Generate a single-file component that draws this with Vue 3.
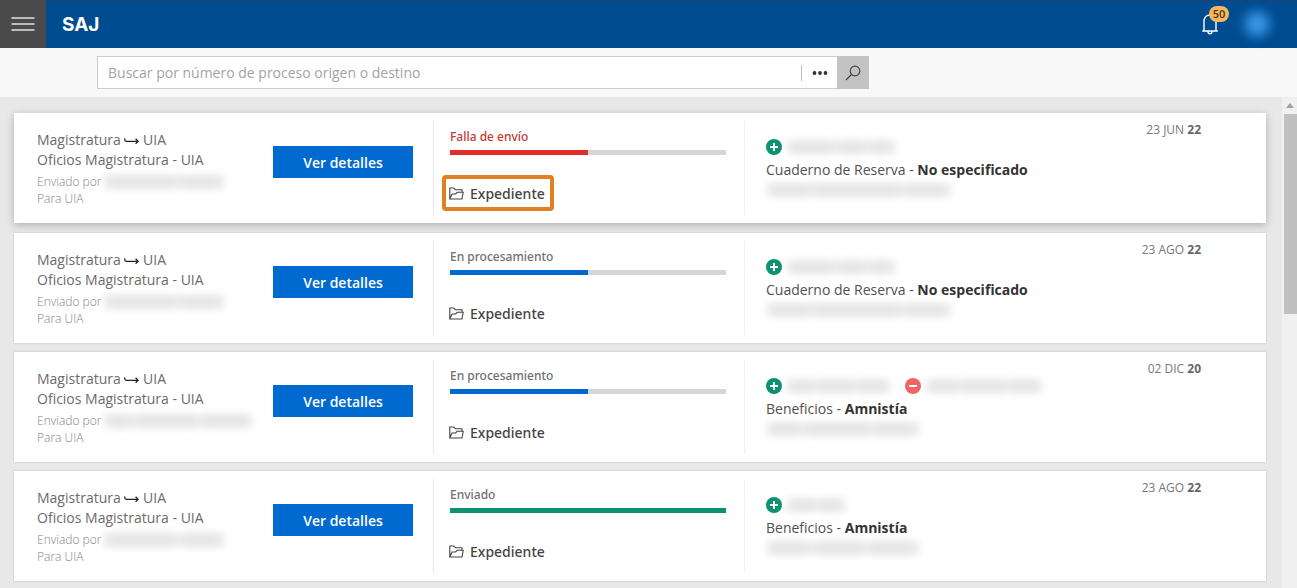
<script setup>
const shipments = [
  {
    id: 1, status: 'Falla de envío', kind: 'error', progress: 50, active: true,
    sender: [72, 42], subject: 'Cuaderno de Reserva', detail: 'No especificado',
    parties: [{ type: 'plus', words: [46, 30, 24] }], reference: [42, 88, 46],
    date: '23 JUN', year: '22'
  },
  {
    id: 2, status: 'En procesamiento', kind: 'working', progress: 50,
    sender: [72, 42], subject: 'Cuaderno de Reserva', detail: 'No especificado',
    parties: [{ type: 'plus', words: [46, 30, 24] }], reference: [42, 88, 46],
    date: '23 AGO', year: '22'
  },
  {
    id: 3, status: 'En procesamiento', kind: 'working', progress: 50,
    sender: [26, 64, 50], subject: 'Beneficios', detail: 'Amnistía',
    parties: [
      { type: 'plus', words: [27, 38, 30] },
      { type: 'minus', words: [32, 46, 30] }
    ],
    reference: [32, 68, 44], date: '02 DIC', year: '20'
  },
  {
    id: 4, status: 'Enviado', kind: 'sent', progress: 100,
    sender: [72, 42], subject: 'Beneficios', detail: 'Amnistía',
    parties: [{ type: 'plus', words: [26, 26] }], reference: [42, 52, 50],
    date: '23 AGO', year: '22'
  }
]
</script>

<template>
  <div class="app">
    <header class="topbar">
      <button class="menu" type="button" aria-label="Menú">
        <svg width="24" height="16" viewBox="0 0 24 16" fill="none" stroke="#e2e2e2" stroke-width="1.5">
          <path d="M.5 2h23M.5 8h23M.5 14h23" />
        </svg>
      </button>
      <span class="brand">SAJ</span>
      <button class="bell" type="button" aria-label="Notificaciones">
        <svg width="18" height="22" viewBox="0 0 18 22" fill="none" stroke="#fff" stroke-width="1.4">
          <path d="M1.2 18h15.6M3 18V8.500C3 4.500 5.500 2 9 2s6 2.500 6 6.500V18M7 18.500c0 3 4 3 4 0" />
        </svg>
        <span class="count">50</span>
      </button>
      <button class="avatar" type="button" aria-label="Perfil"><span class="avatar-glow"></span></button>
    </header>

    <form class="searchbar" @submit.prevent>
      <div class="search-field">
        <input class="search-input" type="text" aria-label="Buscar" placeholder="Buscar por número de proceso origen o destino" />
        <button class="more" type="button" aria-label="Más opciones">
          <svg width="16" height="4" viewBox="0 0 16 4" fill="#333">
            <circle cx="2.500" cy="2" r="1.900" /><circle cx="8" cy="2" r="1.900" /><circle cx="13.500" cy="2" r="1.900" />
          </svg>
        </button>
      </div>
      <button class="search-button" type="submit" aria-label="Buscar proceso">
        <svg width="16" height="16" viewBox="0 0 16 16" fill="none" stroke="#444" stroke-width="1.2">
          <circle cx="10" cy="6" r="4.800" /><path d="M6.500 9.500L1 15" />
        </svg>
      </button>
    </form>

    <div class="body">
      <main class="list">
        <article v-for="item in shipments" :key="item.id" class="card" :class="{ active: item.active }">
          <section class="route">
            <div class="route-text">
              <p class="line">
                Magistratura
                <svg class="arrow" width="15" height="8" viewBox="0 0 15 8" fill="none" stroke="#222" stroke-width="1.3">
                  <path d="M.8 1.500v1.300c0 1 .5 1.500 1.500 1.500h11.500" /><path d="M11.600 1.800l2.500 2.500-2.500 2.500" />
                </svg>
                UIA
              </p>
              <p class="line">Oficios Magistratura - UIA</p>
              <p class="small first">Enviado por
                <span class="redacted" aria-hidden="true">
                  <span v-for="(w, i) in item.sender" :key="i" class="word" :style="{ width: w + 'px' }"></span>
                </span>
              </p>
              <p class="small">Para UIA</p>
            </div>
            <button class="details" type="button">Ver detalles</button>
          </section>

          <section class="state" :class="item.kind">
            <span class="status">{{ item.status }}</span>
            <div class="track" role="progressbar" :aria-label="item.status" :aria-valuenow="item.progress">
              <div class="fill" :style="{ width: item.progress + '%' }"></div>
            </div>
            <button class="file" :class="{ marked: item.active }" type="button">
              <svg width="15" height="13" viewBox="0 0 15 13" fill="none" stroke="#444" stroke-width="1.100">
                <path d="M.8 12V1h4l1.500 1.700h6.700v2.600M.8 12l2.200-5h3.500l1.700-1.700h6L13 12z" />
              </svg>
              Expediente
            </button>
          </section>

          <section class="case">
            <div class="case-text">
              <div class="parties">
                <span v-for="party in item.parties" :key="party.type" class="party">
                  <svg width="16" height="16" viewBox="0 0 16 16" fill="none" stroke="#fff" stroke-width="2">
                    <circle cx="8" cy="8" r="8" stroke="none" :fill="party.type === 'plus' ? '#0b9270' : '#f06464'" />
                    <path :d="party.type === 'plus' ? 'M4 8h8M8 4v8' : 'M4 8h8'" />
                  </svg>
                  <span class="redacted" aria-hidden="true">
                    <span v-for="(w, i) in party.words" :key="i" class="word" :style="{ width: w + 'px' }"></span>
                  </span>
                </span>
              </div>
              <p class="subject">{{ item.subject }} - <strong>{{ item.detail }}</strong></p>
              <span class="redacted reference" aria-hidden="true">
                <span v-for="(w, i) in item.reference" :key="i" class="word" :style="{ width: w + 'px' }"></span>
              </span>
            </div>
            <time class="date">{{ item.date }} <strong>{{ item.year }}</strong></time>
          </section>
        </article>
      </main>
      <div class="scrollbar" aria-hidden="true">
        <svg class="scroll-up" width="8" height="5" viewBox="0 0 8 5"><path d="M0 5l4-5 4 5z" fill="#a0a0a0" /></svg>
        <div class="thumb"></div>
      </div>
    </div>
  </div>
</template>

<style>
body { margin: 0; }
</style>

<style scoped>
.app {
  display: flex;
  flex-direction: column;
  height: 100vh;
  overflow: hidden;
  background: #e8e8e8;
  color: #444;
  font-family: "Open Sans", "Noto Sans", sans-serif;
  font-size: 14px;
}
.app * { box-sizing: border-box; }
p { margin: 0; }
button {
  padding: 0;
  border: 0;
  background: none;
  color: inherit;
  font: inherit;
  cursor: pointer;
}
svg { flex: none; }
.topbar {
  display: flex;
  align-items: center;
  flex: none;
  height: 48px;
  padding-right: 24px;
  background: linear-gradient(#1d456c, #004c90 2px);
}
.menu {
  display: grid;
  place-items: center;
  width: 46px;
  height: 48px;
  background: #4b4b4b;
}
.brand {
  margin-left: 16px;
  color: #fff;
  font-family: Inter, sans-serif;
  font-size: 19px;
  font-weight: 700;
}
.bell {
  position: relative;
  display: flex;
  margin-left: auto;
}
.count {
  position: absolute;
  left: 8px;
  top: -7px;
  width: 20px;
  border-radius: 8px;
  background: #fbb75e;
  color: #4a3212;
  font-size: 11px;
  font-weight: 600;
  line-height: 16px;
  text-align: center;
}
.avatar { margin-left: 22px; }
.avatar-glow {
  display: block;
  width: 32px;
  height: 32px;
  border-radius: 50%;
  background: radial-gradient(closest-side, #55a8ec, #2482d2 60%, #0b5dab);
  filter: blur(4px);
}
.searchbar {
  display: flex;
  flex: none;
  height: 49px;
  padding: 8px 428px 8px 97px;
  background: #f8f8f8;
}
.search-field {
  display: flex;
  flex: 1;
  align-items: center;
  border: 1px solid #ccc;
  border-right: 0;
  background: #fff;
}
.search-input {
  flex: 1;
  min-width: 0;
  padding: 0 10px;
  border: 0;
  outline: 0;
  background: none;
  color: #444;
  font: inherit;
}
.search-input::placeholder { color: #a3a3a3; }
.more {
  display: grid;
  place-items: center;
  width: 36px;
  height: 16px;
  border-left: 1px solid #bbb;
}
.search-button {
  display: grid;
  place-items: center;
  width: 32px;
  background: #c3c3c3;
}
.body {
  display: flex;
  flex: 1;
  min-height: 0;
}
.list {
  display: flex;
  flex: 1;
  flex-direction: column;
  gap: 9px;
  padding: 16px 16px 0 14px;
}
.card {
  display: grid;
  grid-template-columns: 419fr 312fr 521fr;
  flex: none;
  min-height: 110px;
  padding: 8px 0;
  background: #fff;
  box-shadow: 0 0 2px rgba(0, 0, 0, 0.2);
}
.card.active {
  margin-bottom: 1px;
  box-shadow: 0 2px 8px rgba(0, 0, 0, 0.25);
}
.route {
  display: flex;
  justify-content: space-between;
  padding: 9px 20px 0 23px;
}
.line {
  color: #6b6b6b;
  line-height: 20px;
  white-space: nowrap;
}
.small {
  display: flex;
  align-items: center;
  gap: 2px;
  color: #858585;
  font-size: 12px;
  font-weight: 300;
  line-height: 17px;
  white-space: nowrap;
}
.first { margin-top: 3px; }
.redacted {
  display: inline-flex;
  align-items: center;
  gap: 2px;
  height: 16px;
  padding: 0 3px;
  background: #fafafa;
  filter: blur(2px);
}
.word {
  height: 10px;
  background: #dedede;
  filter: blur(4px);
}
.details {
  flex: none;
  width: 140px;
  height: 32px;
  margin-top: 16px;
  background: #006ad0;
  color: #fff;
  font-weight: 600;
}
.state {
  display: flex;
  flex-direction: column;
  align-items: flex-start;
  padding: 7px 18px 0 16px;
  border-left: 1px solid #e8e8e8;
  border-right: 1px solid #f0f0f0;
  font-family: "Noto Sans", "Open Sans", sans-serif;
}
.status {
  color: #707070;
  font-size: 12px;
  font-weight: 500;
  line-height: 18px;
}
.error .status { color: #c43a32; }
.track {
  align-self: stretch;
  height: 5px;
  margin-top: 4px;
  background: #d6d6d6;
}
.fill { height: 100%; }
.error .fill { background: #e22b2b; }
.working .fill { background: #0068ce; }
.sent .fill { background: #0b9270; }
.file {
  display: flex;
  align-items: center;
  gap: 6px;
  height: 36px;
  margin: 20px 0 0 -8px;
  padding: 0 5px 0 3px;
  border: 4px solid transparent;
  border-radius: 4px;
  font-weight: 500;
}
.marked { border-color: #e0801f; }
.case {
  display: flex;
  justify-content: space-between;
  padding: 0 65px 0 21px;
}
.case-text { padding-top: 18px; }
.parties {
  display: flex;
  gap: 14px;
  height: 16px;
}
.party {
  display: flex;
  align-items: center;
  gap: 4px;
}
.subject {
  margin-top: 5px;
  color: #505050;
  line-height: 20px;
  white-space: nowrap;
}
.subject strong { color: #333; font-weight: 700; }
.reference { margin-top: 1px; }
.date {
  color: #777;
  font-size: 12px;
  line-height: 18px;
  white-space: nowrap;
}
.date strong { color: #666; }
.scrollbar {
  display: flex;
  flex-direction: column;
  align-items: center;
  width: 15px;
  background: #f0f0f0;
}
.scroll-up { margin: 6px 0; }
.thumb {
  align-self: stretch;
  height: 200px;
  margin-left: 2px;
  background: #c0c0c0;
}
</style>
